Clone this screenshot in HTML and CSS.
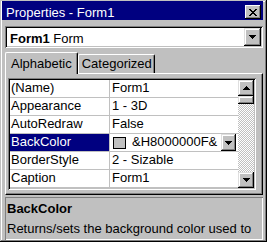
FILE: index.html
```html
<!DOCTYPE html>
<html lang="en">
<head>
    <meta charset="UTF-8">
    <meta name="viewport" content="width=device-width, initial-scale=1.0">
    <title>Properties - Form1</title>
    <link rel="stylesheet" href="styles.css">
</head>
<body>

    <div class="window">
        <div class="titlebar">
            <span class="title">Properties - Form1</span>
            <div class="close">
                <svg width="8" height="7" viewBox="0 0 8 7"><path d="M0 0h2v1H0zM6 0h2v1H6zM1 1h2v1H1zM5 1h2v1H5zM2 2h4v1H2zM3 3h2v1H3zM2 4h4v1H2zM1 5h2v1H1zM5 5h2v1H5zM0 6h2v1H0zM6 6h2v1H6z" fill="#000"/></svg>
            </div>
        </div>

        <div class="combo">
            <span class="combo-text"><b>Form1</b> Form</span>
            <div class="btn drop">
                <svg width="7" height="4" viewBox="0 0 7 4"><path d="M0 0h7v1H0zM1 1h5v1H1zM2 2h3v1H2zM3 3h1v1H3z" fill="#000"/></svg>
            </div>
        </div>

        <div class="tabs">
            <div class="tab active">Alphabetic</div>
            <div class="tab">Categorized</div>
        </div>

        <div class="panel">
            <div class="grid">
                <div class="rows">
                    <div class="row"><div class="name">(Name)</div><div class="value">Form1</div></div>
                    <div class="row"><div class="name">Appearance</div><div class="value">1 - 3D</div></div>
                    <div class="row"><div class="name">AutoRedraw</div><div class="value">False</div></div>
                    <div class="row selected">
                        <div class="name">BackColor</div>
                        <div class="value">
                            <span class="swatch"></span>
                            <span class="value-text">&amp;H8000000F&amp;</span>
                            <div class="btn cell-drop">
                                <svg width="7" height="4" viewBox="0 0 7 4"><path d="M0 0h7v1H0zM1 1h5v1H1zM2 2h3v1H2zM3 3h1v1H3z" fill="#000"/></svg>
                            </div>
                        </div>
                    </div>
                    <div class="row"><div class="name">BorderStyle</div><div class="value">2 - Sizable</div></div>
                    <div class="row"><div class="name">Caption</div><div class="value">Form1</div></div>
                </div>
                <div class="scrollbar">
                    <div class="btn sb-btn">
                        <svg width="7" height="4" viewBox="0 0 7 4"><path d="M3 0h1v1H3zM2 1h3v1H2zM1 2h5v1H1zM0 3h7v1H0z" fill="#000"/></svg>
                    </div>
                    <div class="btn sb-thumb"></div>
                    <div class="sb-track"></div>
                    <div class="btn sb-btn">
                        <svg width="7" height="4" viewBox="0 0 7 4"><path d="M0 0h7v1H0zM1 1h5v1H1zM2 2h3v1H2zM3 3h1v1H3z" fill="#000"/></svg>
                    </div>
                </div>
            </div>
        </div>

        <div class="desc">
            <div class="desc-title">BackColor</div>
            <div class="desc-text">Returns/sets the background color used to</div>
        </div>
    </div>

</body>
</html>
```

FILE: styles.css
```css
body {
    margin: 0;
    background-color: #c0c0c0;
    font-family: "Liberation Sans", Arial, sans-serif;
    font-size: 13px;
    color: #000;
}

.window {
    width: 267px;
    height: 242px;
    box-sizing: border-box;
    padding: 1px 4px 2px 2px;
    background-color: #c0c0c0;
    box-shadow: inset -1px -1px #000, inset 1px 1px #c0c0c0, inset -2px -2px #808080, inset 2px 2px #fff;
    overflow: hidden;
}

/* raised 3d button look */
.btn {
    background-color: #c0c0c0;
    box-shadow: inset -1px -1px #000, inset 1px 1px #dfdfdf, inset -2px -2px #808080, inset 2px 2px #fff;
    display: flex;
    align-items: center;
    justify-content: center;
    box-sizing: border-box;
}

.titlebar {
    height: 19px;
    background-color: #000080;
    color: #fff;
    display: flex;
    justify-content: space-between;
    align-items: flex-start;
}

.title {
    padding: 4px 0 0 4px;
    line-height: 15px;
}

.close {
    width: 16px;
    height: 14px;
    margin: 4px 2px 0 0;
    background-color: #c0c0c0;
    box-shadow: inset -1px -1px #000, inset 1px 1px #fff, inset -2px -2px #808080;
    display: flex;
    align-items: center;
    justify-content: center;
}

.combo {
    margin: 6px 0 0 3px;
    width: 258px;
    height: 22px;
    box-sizing: border-box;
    padding: 2px;
    background-color: #fff;
    box-shadow: inset 1px 1px #808080, inset -1px -1px #fff, inset 2px 2px #000, inset -2px -2px #c0c0c0;
    display: flex;
    justify-content: space-between;
    align-items: flex-start;
}

.combo-text {
    padding: 3px 0 0 3px;
    line-height: 15px;
}

.drop {
    width: 17px;
    height: 18px;
}

.tabs {
    display: flex;
    align-items: flex-end;
    margin: 4px 0 0 3px;
    height: 21px;
}

.tab {
    height: 19px;
    box-sizing: border-box;
    border: 1px solid;
    border-color: #fff #000 transparent #fff;
    border-bottom: none;
    border-radius: 2px 2px 0 0;
    box-shadow: inset -1px 0 #808080;
    padding: 1px 2px 0 3px;
    line-height: 15px;
}

.tab.active {
    height: 22px;
    margin-bottom: -1px;
    position: relative;
    z-index: 1;
    background-color: #c0c0c0;
    padding: 3px 5px 0 5px;
}

.panel {
    margin-left: 3px;
    width: 258px;
    height: 122px;
    box-sizing: border-box;
    border: 1px solid;
    border-color: #fff #000 #000 #fff;
    box-shadow: inset -1px -1px #808080;
    padding: 4px 6px 4px 2px;
}

.grid {
    display: flex;
    height: 112px;
    box-sizing: border-box;
    padding: 2px;
    box-shadow: inset 1px 1px #808080, inset -1px -1px #fff, inset 2px 2px #000, inset -2px -2px #c0c0c0;
}

.rows {
    flex: 1;
    background-color: #fff;
    overflow: hidden;
}

.row {
    display: flex;
    height: 18px;
    box-sizing: border-box;
    border-bottom: 1px solid #c0c0c0;
    line-height: 15px;
}

.name {
    width: 100px;
    box-sizing: border-box;
    border-right: 1px solid #c0c0c0;
    padding-left: 1px;
}

.value {
    flex: 1;
    min-width: 0;
    padding-left: 2px;
    display: flex;
    align-items: flex-start;
    white-space: nowrap;
}

.selected .name {
    background-color: #000080;
    color: #fff;
}

.swatch {
    width: 13px;
    height: 12px;
    box-sizing: border-box;
    margin: 3px 6px 0 1px;
    border: 1px solid #000;
    background-color: #c0c0c0;
    flex-shrink: 0;
}

.value-text {
    flex: 1;
    min-width: 0;
    overflow: hidden;
}

.cell-drop {
    width: 15px;
    height: 17px;
    margin-right: 2px;
    flex-shrink: 0;
}

.scrollbar {
    width: 16px;
    display: flex;
    flex-direction: column;
}

.sb-btn {
    height: 16px;
}

.sb-thumb {
    height: 8px;
}

.sb-track {
    flex: 1;
    background: repeating-conic-gradient(#c0c0c0 0 25%, #fff 0 50%) 0 0 / 2px 2px;
}

.desc {
    margin: 2px 0 0 3px;
    width: 258px;
    height: 43px;
    box-sizing: border-box;
    padding: 4px 0 0 2px;
    box-shadow: inset 1px 1px #808080, inset -1px -1px #fff;
    line-height: 15px;
    overflow: hidden;
}

.desc-title {
    font-weight: bold;
}

.desc-text {
    margin-top: 5px;
    white-space: nowrap;
}
```
